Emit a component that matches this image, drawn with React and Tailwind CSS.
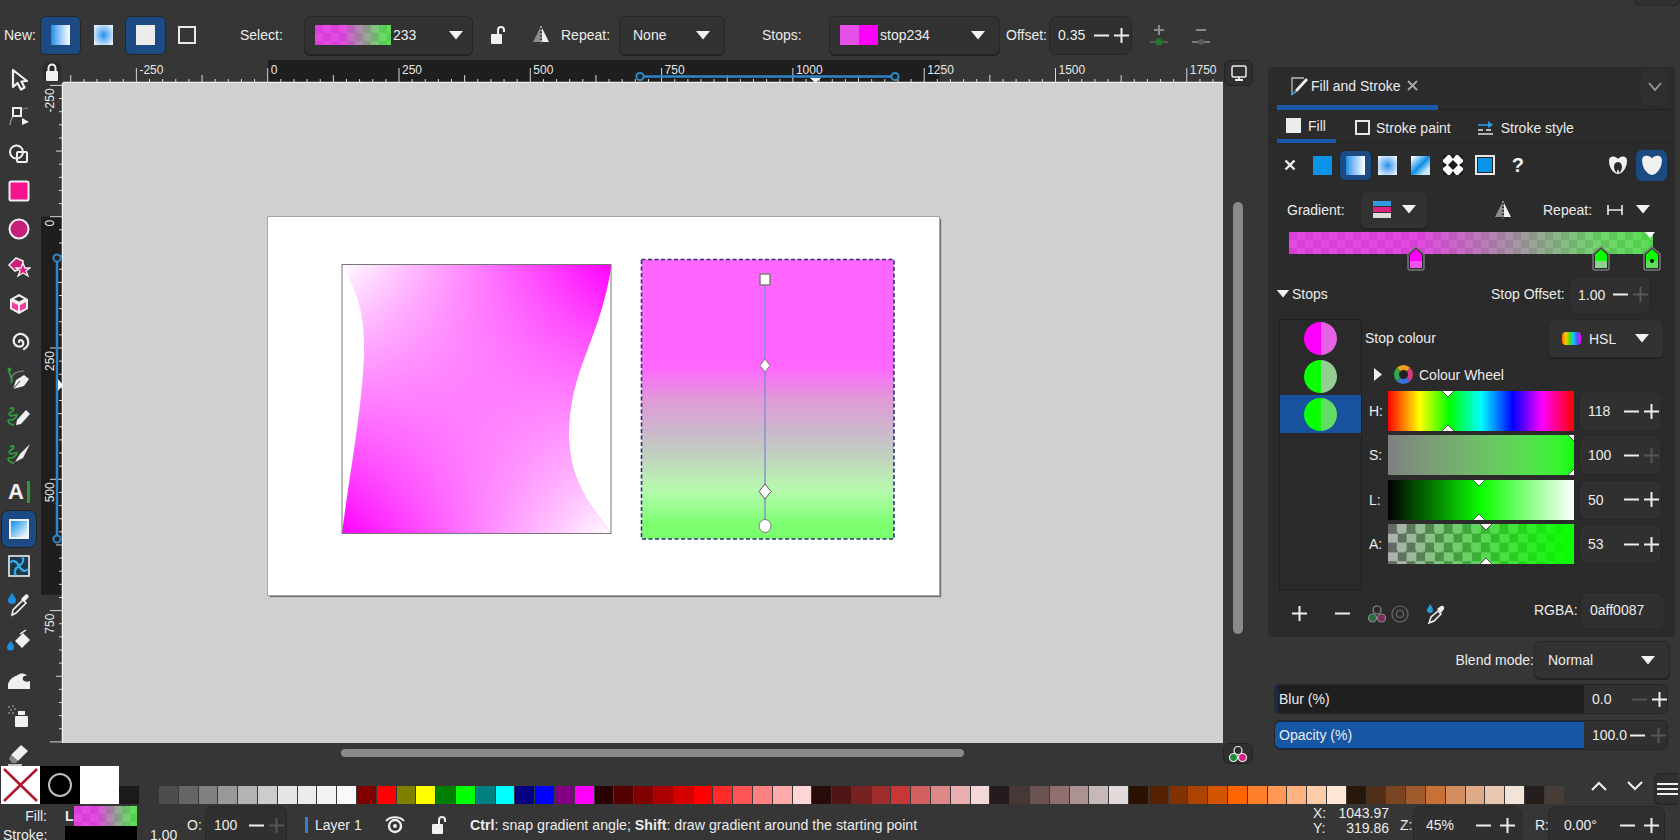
import React from 'react'

const grays = ['#4d4d4d','#666666','#808080','#999999','#b3b3b3','#cccccc','#e6e6e6','#ececec','#f2f2f2','#f9f9f9']
const basics = ['#800000','#ff0000','#808000','#ffff00','#008000','#00ff00','#008080','#00ffff','#000080','#0000ff','#800080','#ff00ff']
const reds = ['#2b0000','#550000','#800000','#aa0000','#d40000','#ff0000','#ff2a2a','#ff5555','#ff8080','#ffaaaa','#ffd5d5']
const dullReds = ['#280b0b','#501616','#782121','#a02c2c','#c83737','#d35f5f','#de8787','#e9afaf','#f4d7d7']
const greyReds = ['#241c1c','#483737','#6c5353','#916f6f','#ac9393','#c8b7b7','#e3dbdb']
const oranges = ['#2b1100','#552200','#803300','#aa4400','#d45500','#ff6600','#ff7f2a','#ff9955','#ffb380','#ffccaa','#ffe6d5']
const browns = ['#28170b','#502d16','#784421','#a05a2c','#c87137','#d38d5f','#deaa87','#e9c6af','#f4e3d7']
const palette = [...grays, ...basics, ...reds, ...dullReds, ...greyReds, ...oranges, ...browns, '#241f1c', '#483e37']

const Arrow = ({ className = '' }) => (
  <svg width="14" height="9" viewBox="0 0 14 9" className={className}><path d="M0 0H14L7 8.5Z" fill="#f2f2f2" /></svg>
)

const Minus = ({ off }) => (
  <svg width="15" height="15" viewBox="0 0 15 15"><path d="M0 7.5H15" stroke={off ? '#555' : '#eee'} strokeWidth="2" /></svg>
)

const Plus = ({ off }) => (
  <svg width="15" height="15" viewBox="0 0 15 15"><path d="M0 7.5H15M7.5 0V15" stroke={off ? '#555' : '#eee'} strokeWidth="2" /></svg>
)

const Spin = ({ value, className = '', minusOff, plusOff, pad = 'pl-2', wide }) => (
  <div className={`flex items-center rounded-lg border border-[#272727] bg-[#303030] ${pad} ${className}`}>
    <span className="flex-1">{value}</span>
    <span className={`flex justify-center ${wide ? 'w-[24px]' : 'w-[20px]'}`}><Minus off={minusOff} /></span>
    <span className={`flex justify-center ${wide ? 'w-[24px]' : 'w-[20px]'}`}><Plus off={plusOff} /></span>
  </div>
)

const Drop = ({ className = '', children }) => (
  <div className={`flex items-center rounded-md border border-[#272727] bg-[#323232] shadow-[0_1px_0_#1f1f1f] ${className}`}>
    {children}
  </div>
)

const gradientSwatch = 'bg-[linear-gradient(90deg,rgba(255,0,255,0.6)_0%,rgba(255,0,255,0.6)_35%,rgba(10,255,0,0.4)_85%,rgba(10,255,0,0.53)_100%),repeating-conic-gradient(#b8b8b8_0_25%,#9e9e9e_0_50%)] [background-size:100%_100%,16px_16px]'

const LockOpen = ({ size = 20 }) => (
  <svg width={size} height={size} viewBox="0 0 20 20" fill="none">
    <rect x="3" y="9" width="11" height="10" rx="1" fill="#f0f0f0" />
    <path d="M10 9V5a3 3 0 0 1 6 0v2" stroke="#f0f0f0" strokeWidth="2" />
  </svg>
)

const FlipIcon = () => (
  <svg width="20" height="20" viewBox="0 0 20 20">
    <path d="M9 3V17H2Z" fill="#8a8a8a" />
    <path d="M11 3V17H18Z" fill="#f0f0f0" />
    <path d="M10 1V19" stroke="#eee" strokeWidth="1" strokeDasharray="2 1.5" />
  </svg>
)

// tool icons, top to bottom
const toolIcons = [
  <svg width="22" height="24" viewBox="0 0 22 24" fill="none"><path d="M5 3V20L9.5 16L13 22.5L16.5 20.5L13.5 14.5L19 14Z" stroke="#f0f0f0" strokeWidth="2.2" strokeLinejoin="round" /></svg>,
  <svg width="24" height="24" viewBox="0 0 24 24" fill="none"><path d="M3 21C4 12 10 5 21 4" stroke="#999" strokeWidth="1.2" /><rect x="6" y="4" width="8" height="8" fill="#333" stroke="#f0f0f0" strokeWidth="2" /><path d="M15 14L22 18L15 21Z" fill="#f0f0f0" /></svg>,
  <svg width="24" height="24" viewBox="0 0 24 24" fill="none"><circle cx="9.5" cy="10" r="6.5" stroke="#f0f0f0" strokeWidth="2" /><rect x="10" y="10" width="10" height="10" rx="1" stroke="#f0f0f0" strokeWidth="2" /></svg>,
  <svg width="24" height="24" viewBox="0 0 24 24"><rect x="2.5" y="2.5" width="19" height="19" rx="1.5" fill="#f5148e" stroke="#f0f0f0" strokeWidth="2" /></svg>,
  <svg width="24" height="24" viewBox="0 0 24 24"><circle cx="12" cy="12" r="9.5" fill="#c71f7a" stroke="#f0f0f0" strokeWidth="2" /></svg>,
  <svg width="24" height="24" viewBox="0 0 24 24"><path d="M2 11L9 4L16 7L15 14L8 17Z" fill="#c71f7a" stroke="#f0f0f0" strokeWidth="1.5" /><path d="M16 9L18 14L23 14L19 17L21 22L16 19L11 22L13 17L9 14L14 14Z" fill="#e01f80" stroke="#f0f0f0" strokeWidth="1.3" /></svg>,
  <svg width="24" height="24" viewBox="0 0 24 24"><path d="M12 2L21 7V17L12 22L3 17V7Z" fill="#f0f0f0" /><path d="M5 10L11 13V19L5 16Z" fill="#ee3fa0" /><path d="M13 13L19 10V16L13 19Z" fill="#ee3fa0" /><path d="M7 7L12 4.5L17 7L12 9.5Z" fill="#333" /></svg>,
  <svg width="24" height="24" viewBox="0 0 24 24" fill="none"><path d="M12 13a2 2 0 0 1 2-2 3.5 3.5 0 0 1 1 6 6 6 0 0 1-8-3 7 7 0 0 1 5-9 8 8 0 0 1 9 6 8 8 0 0 1-4 9" stroke="#f0f0f0" strokeWidth="2.2" strokeLinecap="round" /></svg>,
  <svg width="26" height="26" viewBox="0 0 26 26" fill="none"><path d="M3 3C2 9 8 11 5 17" stroke="#2f9a3a" strokeWidth="2" /><circle cx="3.5" cy="3.5" r="2" fill="#2f9a3a" /><path d="M5 12C7 7 12 5 18 5" stroke="#888" strokeWidth="1.2" /><path d="M7 23L10 14L18 9L23 13L18 20Z" fill="#f0f0f0" /><path d="M7 23L14 15" stroke="#333" strokeWidth="1" /></svg>,
  <svg width="26" height="26" viewBox="0 0 26 26" fill="none"><path d="M4 6C8 3 9 7 5 9S4 14 9 12 8 18 4 17 3 22 8 22" stroke="#2f9a3a" strokeWidth="1.8" /><path d="M10 22L11 17L20 7L24 11L15 21Z" fill="#f0f0f0" /></svg>,
  <svg width="26" height="26" viewBox="0 0 26 26" fill="none"><path d="M4 6C8 3 9 7 5 9S4 14 9 12 8 18 4 17 3 22 8 22" stroke="#2f9a3a" strokeWidth="1.8" /><path d="M9 21L14 13L24 3L17 17Z" fill="#f0f0f0" /></svg>,
  <div className="flex items-center pt-[2px]"><span className="text-[22px] leading-none font-bold text-[#f0f0f0]">A</span><span className="ml-[3px] h-[22px] w-[3px] bg-[#2f9a3a]" /></div>,
  <div className="h-[20px] w-[20px] border-2 border-[#f0f0f0] bg-[linear-gradient(135deg,#0a8fe8,#fff)]" />,
  <svg width="22" height="22" viewBox="0 0 22 22" fill="none"><rect x="1" y="1" width="20" height="20" fill="#1c3a4a" stroke="#f0f0f0" strokeWidth="1.6" /><path d="M11 11C8 5 4 5 2 8M11 11C16 8 16 4 14 2M11 11C14 17 18 17 20 14M11 11C6 14 6 18 8 20" stroke="#39a9e8" strokeWidth="2.2" /></svg>,
  <svg width="26" height="26" viewBox="0 0 26 26"><path d="M6 2C8 5 10 7 10 9A4 4 0 0 1 2 9C2 7 4 5 6 2Z" fill="#1d8fe0" /><path d="M6 24L7 19L17 9L20 12L10 22Z" fill="#333" stroke="#f0f0f0" strokeWidth="1.6" /><path d="M15 8L19 4C21 2 24 5 22 7L18 11Z" fill="#f0f0f0" /></svg>,
  <svg width="26" height="26" viewBox="0 0 26 26"><path d="M5 13C6 15 8 17 8 19A3.5 3.5 0 0 1 1 19C1 17 3 15 5 13Z" fill="#1d8fe0" /><path d="M9 13L17 5L24 12L16 20Z" fill="#f0f0f0" /><path d="M14 6L20 2" stroke="#f0f0f0" strokeWidth="1.5" /></svg>,
  <svg width="26" height="26" viewBox="0 0 26 26"><path d="M2 23V18C4 12 9 10 12 9C16 6 20 8 21 10C18 9 16 11 17 14C19 16 22 16 24 15V23Z" fill="#f0f0f0" /></svg>,
  <svg width="26" height="26" viewBox="0 0 26 26"><rect x="9" y="13" width="13" height="11" rx="1" fill="#f0f0f0" /><rect x="12" y="8" width="7" height="4" fill="#f0f0f0" /><g fill="#8d8d8d"><circle cx="3" cy="4" r="1" /><circle cx="7" cy="3" r="1" /><circle cx="5" cy="7" r="1" /><circle cx="9" cy="6" r="1" /><circle cx="3" cy="10" r="1" /><circle cx="7" cy="10" r="1" /></g></svg>,
  <svg width="26" height="26" viewBox="0 0 26 26"><path d="M5 14L15 4L22 10L12 20Z" fill="#f0f0f0" /><path d="M5 14L12 20L10 22H6L3 18Z" fill="#888" /><path d="M2 24H16" stroke="#f0f0f0" strokeWidth="1.5" /></svg>,
]

const RulerH = () => {
  const zero = 204.7
  const step = 13.13
  const marks = []
  for (let i = -15; i <= 73; i++) marks.push(i)
  return (
    <svg width="1160" height="23" className="block">
      <rect x={zero} y="0" width="672" height="23" fill="#1e1e1e" />
      {marks.map((i) => {
        const x = zero + i * step
        const top = i % 10 === 0 ? 8 : i % 5 === 0 ? 15 : 19
        return <path key={i} d={`M${x} ${top}V23`} stroke="#d8d8d8" strokeWidth="1" />
      })}
      {marks.filter((i) => i % 10 === 0).map((i) => (
        <text key={i} x={zero + i * step + 3} y="13.5" fontSize="12" fill="#e8e8e8">{i * 25}</text>
      ))}
      <path d="M0 22.5H1160" stroke="#f0f0f0" strokeWidth="1.5" />
      <path d="M577 16.5H832" stroke="#2f86c8" strokeWidth="2.5" />
      <circle cx="577" cy="16.5" r="3.6" fill="#222" stroke="#2f86c8" strokeWidth="2" />
      <circle cx="832" cy="16.5" r="3.6" fill="#222" stroke="#2f86c8" strokeWidth="2" />
      <path d="M747 18H758L752.500 23Z" fill="#f5f5f5" />
    </svg>
  )
}

const RulerV = () => {
  const zero = 133.7
  const step = 13.13
  const marks = []
  for (let i = -10; i <= 40; i++) marks.push(i)
  return (
    <svg width="22" height="660" className="block">
      <rect x="0" y={zero} width="22" height="378" fill="#1e1e1e" />
      {marks.map((i) => {
        const y = zero + i * step
        const left = i % 10 === 0 ? 9 : i % 5 === 0 ? 15 : 18
        return <path key={i} d={`M${left} ${y}H22`} stroke="#d8d8d8" strokeWidth="1" />
      })}
      {marks.filter((i) => i % 10 === 0 && i < 40).map((i) => {
        const y = zero + i * step + 3
        return <text key={i} transform={`translate(12.500 ${y}) rotate(-90)`} textAnchor="end" fontSize="12" fill="#e8e8e8">{i * 25}</text>
      })}
      <path d="M21.500 0V660" stroke="#f0f0f0" strokeWidth="1.5" />
      <path d="M16 175V456" stroke="#2f86c8" strokeWidth="2.5" />
      <circle cx="16" cy="175" r="3.6" fill="#222" stroke="#2f86c8" strokeWidth="2" />
      <circle cx="16" cy="456" r="3.6" fill="#222" stroke="#2f86c8" strokeWidth="2" />
      <path d="M17 296V308L22 302Z" fill="#f5f5f5" />
    </svg>
  )
}

// the page with its two objects; coordinates are page-local
const Drawing = () => (
  <svg width="671" height="378" className="block">
    <defs>
      <linearGradient id="meshTop" x1="0" x2="1" y1="0" y2="0"><stop offset="0" stopColor="#fff" /><stop offset="1" stopColor="#f0f" /></linearGradient>
      <linearGradient id="meshBottom" x1="0" x2="1" y1="0" y2="0"><stop offset="0" stopColor="#f0f" /><stop offset="1" stopColor="#fff" /></linearGradient>
      <linearGradient id="fade" x1="0" x2="0" y1="0" y2="1"><stop offset="0" stopColor="#000" /><stop offset="1" stopColor="#fff" /></linearGradient>
      <mask id="fadeMask"><rect x="74" y="47" width="270" height="270" fill="url(#fade)" /></mask>
      <clipPath id="wavy"><path d="M74 47C88 73 96 93 96 128C96 183 82 253 74 316.500H343C322 288 301 263 301 218C301 153 332 123 343 51V47Z" /></clipPath>
      <linearGradient id="stops" x1="0" x2="0" y1="0" y2="1">
        <stop offset="0" stopColor="#ff66ff" />
        <stop offset="0.385" stopColor="#ff66ff" />
        <stop offset="0.5" stopColor="#e09ad8" />
        <stop offset="0.615" stopColor="#cbb8cb" />
        <stop offset="0.69" stopColor="#c2cdc0" />
        <stop offset="0.77" stopColor="#bde8b5" />
        <stop offset="0.83" stopColor="#b5fbad" />
        <stop offset="0.95" stopColor="#7bff6f" />
        <stop offset="1" stopColor="#7bff6f" />
      </linearGradient>
    </defs>
    <g clipPath="url(#wavy)">
      <rect x="74" y="47" width="270" height="270" fill="url(#meshTop)" />
      <rect x="74" y="47" width="270" height="270" fill="url(#meshBottom)" mask="url(#fadeMask)" />
    </g>
    <rect x="74" y="47.500" width="269" height="269" fill="none" stroke="#777" strokeWidth="1" />
    <rect x="373.500" y="42.500" width="252.500" height="279.500" fill="url(#stops)" />
    <rect x="373.500" y="42.500" width="252.500" height="279.500" fill="none" stroke="#2f2f7a" strokeWidth="1.6" strokeDasharray="4 2.500" />
    <path d="M497 62V309" stroke="#7e8fd8" strokeWidth="1.4" />
    <rect x="492" y="57" width="10" height="11" fill="#fff" stroke="#777" strokeWidth="1.4" />
    <path d="M497 142L502 148.500L497 155L492 148.500Z" fill="#fff" stroke="#777" />
    <path d="M497 267L503 274.500L497 282L491 274.500Z" fill="#fff" stroke="#555" />
    <ellipse cx="497" cy="309" rx="6" ry="6.500" fill="#fff" stroke="#777" />
  </svg>
)

const SliderRow = ({ label, value, bg, pos, minusOff, plusOff }) => (
  <div className="flex h-[40px] items-center">
    <span className="ml-[7px] w-[19px]">{label}</span>
    <div className={`relative h-[40px] w-[186px] overflow-hidden ${bg}`}>
      <svg width="14" height="7" viewBox="0 0 14 7" className="absolute -top-px -ml-[7px]" style={{ left: `${pos}%` }}><path d="M0 0H14L7 7Z" fill="#fff" stroke="#333" strokeWidth="0.8" /></svg>
      <svg width="14" height="7" viewBox="0 0 14 7" className="absolute -bottom-px -ml-[7px]" style={{ left: `${pos}%` }}><path d="M0 7H14L7 0Z" fill="#fff" stroke="#333" strokeWidth="0.8" /></svg>
    </div>
    <Spin value={value} className="ml-[5px] h-[40px] w-[83px]" minusOff={minusOff} plusOff={plusOff} />
  </div>
)

const StopCircle = ({ solid, soft }) => (
  <div className="flex h-[33px] w-[33px] overflow-hidden rounded-full">
    <span className="w-1/2" style={{ background: solid }} />
    <span className="w-1/2" style={{ background: soft }} />
  </div>
)

const Handle = ({ top, bottom, dot, className }) => (
  <svg width="18" height="25" viewBox="0 0 18 25" className={`absolute ${className}`}>
    <path d="M9 1L17 8V22Q17 24 15 24H3Q1 24 1 22V8Z" fill="#2b2b2b" stroke="#777" strokeWidth="1.5" />
    <path d="M9 3L15 8.500V15H3V8.500Z" fill={top} />
    <rect x="3" y="15" width="12" height="7" fill={bottom} />
    {dot && <circle cx="9" cy="15" r="2" fill="#111" />}
  </svg>
)

const PaintIcons = () => (
  <div className="flex h-[44px] items-center pl-[6px] pr-[8px]">
    <span className="flex w-[32.5px] justify-center">
      <svg width="12" height="12" viewBox="0 0 12 12"><path d="M1.500 1.500L10.500 10.500M10.500 1.500L1.500 10.500" stroke="#eee" strokeWidth="2.4" /></svg>
    </span>
    <span className="flex w-[32.5px] justify-center"><span className="h-[19px] w-[19px] bg-[#0a93e8]" /></span>
    <span className="flex h-[31px] w-[32.5px] items-center justify-center rounded-md border border-[#232323] bg-[#1c4a82]">
      <span className="h-[19px] w-[19px] bg-linear-to-r from-[#0a8fe8] to-white" />
    </span>
    <span className="flex w-[32.5px] justify-center"><span className="h-[19px] w-[19px] bg-radial from-[#0a8fe8] to-white" /></span>
    <span className="flex w-[32.5px] justify-center"><span className="h-[19px] w-[19px] bg-[linear-gradient(135deg,#fff_5%,#0a8fe8_50%,#cfe8fa_80%)]" /></span>
    <span className="flex w-[32.5px] justify-center">
      <svg width="20" height="20" viewBox="0 0 20 20"><rect width="20" height="20" fill="#fff" /><path d="M0 0H5L0 5ZM7 0H13L10 4ZM15 0H20V5ZM0 7L4 10L0 13ZM20 7V13L16 10ZM0 15L5 20H0ZM7 20L10 16L13 20ZM20 15V20H15ZM10 5L15 10L10 15L5 10Z" fill="#1a1a1a" /></svg>
    </span>
    <span className="flex w-[32.5px] justify-center"><span className="h-[20px] w-[20px] border-2 border-[#e8e8e8] bg-[#0a93e8] outline outline-[#222] -outline-offset-3" /></span>
    <span className="flex w-[32.5px] justify-center text-[20px] leading-none font-bold text-[#f0f0f0]">?</span>
    <span className="ml-auto flex w-[31px] justify-center">
      <svg width="20" height="20" viewBox="0 0 20 20"><path d="M10 4C12 1 19 0 19 6C19 13 14 19 10 19S1 13 1 6C1 0 8 1 10 4Z" fill="#f0f0f0" /><path d="M10 7C7 7 6 10 6 12C6 14 7 16 8.500 18L10 14L11.500 18C13 16 14 14 14 12C14 10 13 7 10 7Z" fill="#2b2b2b" /></svg>
    </span>
    <span className="ml-[2.5px] flex h-[31px] w-[31px] items-center justify-center rounded-md bg-[#1c4a82]">
      <svg width="22" height="22" viewBox="0 0 20 20"><path d="M10 4C12 1 19 0 19 6C19 13 14 19 10 19S1 13 1 6C1 0 8 1 10 4Z" fill="#f0f0f0" /></svg>
    </span>
  </div>
)

const DockPanel = () => (
  <div className="flex w-[412px] flex-col">
    <div className="mt-[7px] flex w-[407px] flex-col bg-[#2b2b2b]">
      <div className="flex h-[43px] items-center border-b border-[#222] pl-[9px]">
        <div className="flex h-[43px] w-[161px] items-center border-b-[5px] border-[#1a5aa8] pl-[13px]">
          <svg width="20" height="22" viewBox="0 0 20 22" fill="none"><path d="M2 20V3H14" stroke="#bbb" strokeWidth="1.3" /><path d="M5 15L16 3L18 5L7 17Z" fill="#f0f0f0" /><path d="M1 21L5 15L7 17Z" fill="#2e9be0" /></svg>
          <span className="ml-[1px]">Fill and Stroke</span>
          <svg width="11" height="11" viewBox="0 0 11 11" className="ml-[7px]"><path d="M1 1L10 10M10 1L1 10" stroke="#aaa" strokeWidth="1.8" /></svg>
        </div>
        <div className="-mt-[3px] ml-[203px] flex h-[36px] w-[27px] items-center justify-center rounded-md bg-[#2f2f2f]">
          <svg width="14" height="9" viewBox="0 0 14 9" fill="none"><path d="M1 1L7 8L13 1" stroke="#999" strokeWidth="1.8" /></svg>
        </div>
      </div>
      <div className="flex h-[33px] items-center border-b border-[#222] pl-[9px] pt-[3px]">
        <div className="-mt-[3px] flex h-[33px] w-[59px] items-center border-b-[4px] border-[#1a5aa8] pl-[9px] pt-[3px]">
          <span className="h-[15px] w-[15px] bg-[#ececec]" />
          <span className="ml-[7px]">Fill</span>
        </div>
        <span className="ml-[19px] h-[15px] w-[15px] border-2 border-[#e8e8e8]" />
        <span className="ml-[6px]">Stroke paint</span>
        <svg width="17" height="17" viewBox="0 0 17 17" fill="none" className="ml-[26px]"><path d="M1 6H13" stroke="#2e9be0" strokeWidth="1.6" /><path d="M11 2L16 6L11 9Z" fill="#2e9be0" /><path d="M1 11H6M9 11H14" stroke="#eee" strokeWidth="1.4" /><path d="M1 15H16" stroke="#eee" strokeWidth="1.4" /></svg>
        <span className="ml-[7px]">Stroke style</span>
      </div>
      <PaintIcons />
      <div className="flex h-[45px] items-center">
        <span className="ml-[19px] w-[73px]">Gradient:</span>
        <Drop className="h-[38px] w-[68px] justify-center gap-[11px] bg-[#303030]">
          <svg width="18" height="17" viewBox="0 0 18 17"><rect y="0" width="18" height="5" fill="#2e9be0" /><rect y="6" width="18" height="5" fill="#d8237f" /><rect y="12" width="18" height="5" fill="#ddd" /></svg>
          <Arrow />
        </Drop>
        <span className="ml-[65px]"><FlipIcon /></span>
        <span className="ml-[30px]">Repeat:</span>
        <svg width="16" height="10" viewBox="0 0 16 10" className="ml-[15px]"><path d="M1 0V10M15 0V10M1 5H15" stroke="#eee" strokeWidth="1.6" /></svg>
        <Arrow className="ml-[13px]" />
      </div>
      <div className="relative h-[44px]">
        <div className={`ml-[21px] h-[22px] w-[364px] ${gradientSwatch}`} />
        <Handle top="#ff00ff" bottom="#ee55ee" className="left-[139px] top-[14px]" />
        <Handle top="#0aff00" bottom="#8fd28f" className="left-[324px] top-[14px]" />
        <Handle top="#0aff00" bottom="#5fdf5f" dot className="left-[375px] top-[14px]" />
        <svg width="10" height="6" viewBox="0 0 10 6" className="absolute left-[377px] top-0"><path d="M0 0H10L5 6Z" fill="#fff" /></svg>
      </div>
      <div className="flex h-[37px] items-center">
        <Arrow className="-mt-[2px] ml-[8px] h-[8px]" />
        <span className="-mt-[2px] ml-[2px] w-[199px]">Stops</span>
        <span className="-mt-[2px] w-[78px]">Stop Offset:</span>
        <Spin value="1.00" className="h-[38px] w-[82px]" plusOff />
      </div>
      <div className="mt-[6px] flex h-[271px]">
        <div className="ml-[11px] flex h-[271px] w-[83px] flex-col items-center border border-[#1f1f1f] bg-[#2a2a2a]">
          <div className="flex h-[37px] w-full items-center justify-center"><StopCircle solid="#ff00ff" soft="#e663e6" /></div>
          <div className="flex h-[38px] w-full items-center justify-center"><StopCircle solid="#0aff00" soft="#93cf93" /></div>
          <div className="flex h-[38px] w-full items-center justify-center bg-[#16529e]"><StopCircle solid="#0aff00" soft="#62dc62" /></div>
        </div>
        <div className="flex w-[302px] flex-col">
          <div className="flex h-[39px] items-center justify-between pl-[3px]">
            <span className="-mt-[2px]">Stop colour</span>
            <Drop className="h-[39px] w-[116px] pl-[13px]">
              <span className="h-[13px] w-[19px] rounded-sm bg-[linear-gradient(90deg,#f60,#fc0,#5d0,#0cf,#55f,#f0f)]" />
              <span className="ml-[8px]">HSL</span>
              <Arrow className="ml-auto mr-[14px]" />
            </Drop>
          </div>
          <div className="flex h-[33px] items-center">
            <svg width="9" height="13" viewBox="0 0 9 13" className="ml-[12px]"><path d="M0 0L8 6.500L0 13Z" fill="#eee" /></svg>
            <span className="ml-[11px] h-[19px] w-[19px] rounded-full border-[5px] border-[#e8a020] bg-[#222] [border-left-color:#2fa84f] [border-right-color:#d63a7a] [border-bottom-color:#3a6fd8]" />
            <span className="ml-[6px]">Colour Wheel</span>
          </div>
          <div className="flex flex-col gap-[4.4px]">
            <SliderRow label="H:" value="118" pos={32} bg="bg-[linear-gradient(90deg,#f00,#ff0_17%,#0f0_33%,#0ff_50%,#00f_67%,#f0f_83%,#f00)]" />
            <SliderRow label="S:" value="100" pos={100} plusOff bg="bg-linear-to-r from-[#808080] to-[#0aff00]" />
            <SliderRow label="L:" value="50" pos={49} bg="bg-[linear-gradient(90deg,#000,#0aff00_50%,#fff)]" />
            <SliderRow label="A:" value="53" pos={52.5} bg="bg-[linear-gradient(90deg,rgba(10,255,0,0),#0aff00),repeating-conic-gradient(#b0b0b0_0_25%,#666_0_50%)] [background-size:100%_100%,18.6px_18.6px]" />
          </div>
        </div>
      </div>
      <div className="flex h-[47px] items-center">
        <span className="ml-[24px]"><Plus /></span>
        <span className="ml-[28px]"><Minus /></span>
        <svg width="20" height="20" viewBox="0 0 20 20" fill="none" className="ml-[17px]" stroke="#888" strokeWidth="1.2"><circle cx="10" cy="6" r="4" /><circle cx="5.500" cy="14" r="4" fill="#2c6a3f" /><circle cx="14.500" cy="14" r="4" fill="#7a2c5c" /></svg>
        <svg width="18" height="18" viewBox="0 0 18 18" fill="none" className="ml-[4px]" stroke="#6a6a6a" strokeWidth="1.2"><circle cx="9" cy="9" r="8" /><circle cx="9" cy="9" r="3.500" /></svg>
        <svg width="20" height="20" viewBox="0 0 20 20" className="ml-[17px]"><path d="M4 0C6 3 7 4 7 6A3 3 0 0 1 1 6C1 4 3 3 4 0Z" fill="#2e9be0" /><path d="M3 19L5 13L12 7L15 10L8 17Z" fill="#333" stroke="#f0f0f0" strokeWidth="1.5" /><path d="M11 5L15 2C17 1 19 3 18 5L15 9Z" fill="#f0f0f0" /></svg>
        <div className="mt-[2px] ml-[88px] flex h-[38px] items-center self-start">
          <span className="-mt-[3px] w-[46px]">RGBA:</span>
          <div className="flex h-[38px] w-[85px] items-center rounded-lg border border-[#272727] bg-[#303030] pb-[3px] pl-[9px]">0aff0087</div>
        </div>
      </div>
    </div>
    <div className="flex w-[407px] flex-col pt-[4px]">
      <div className="flex h-[38px] items-center justify-end pr-[5px]">
        <span>Blend mode:</span>
        <Drop className="h-[38px] w-[136px] pl-[13px]">
          <span>Normal</span>
          <Arrow className="ml-auto mr-[14px]" />
        </Drop>
      </div>
      <div className="ml-[6px] mt-[5px] flex h-[30px] w-[394px] items-center rounded-md border border-[#262626] bg-[#303030]">
        <div className="flex h-full w-[309px] items-center border-l-[3px] border-[#0f2f58] bg-[#1f1f1f] pl-[1px]">Blur (%)</div>
        <span className="ml-[8px] w-[40px]">0.0</span>
        <Minus off />
        <span className="ml-[5px]"><Plus /></span>
      </div>
      <div className="ml-[6px] mt-[6px] flex h-[30px] w-[394px] items-center rounded-md border border-[#262626] bg-[#303030]">
        <div className="flex h-full w-[309px] items-center rounded-l-md border-y border-[#0d2c55] bg-[#1556a5] pl-[4px]">Opacity (%)</div>
        <span className="ml-[8px] w-[38px]">100.0</span>
        <Minus />
        <span className="ml-[6px]"><Plus off /></span>
      </div>
    </div>
  </div>
)

const StatusBar = () => (
  <div className="flex h-[38px] shrink-0 items-center">
    <div className="flex h-[34px] w-[187px] flex-col self-start">
      <div className="flex h-[20px] items-center">
        <span className="w-[47px] text-right">Fill:</span>
        <span className="ml-[18px] w-[9px] font-bold">L</span>
        <span className={`h-[20px] w-[63px] ${gradientSwatch}`} />
      </div>
      <div className="flex h-[18px] items-center">
        <span className="w-[47px] pl-[3px]">Stroke:</span>
        <span className="ml-[18px] h-[18px] w-[72px] bg-black" />
        <span className="ml-[13px]">1.00</span>
      </div>
    </div>
    <span className="w-[18px]">O:</span>
    <Spin value="100" className="h-[38px] w-[82px] rounded-b-none" plusOff />
    <span className="ml-[18px] h-[16px] w-[3px] bg-[#3a7ad0]" />
    <span className="ml-[7px] w-[60px]">Layer 1</span>
    <svg width="20" height="18" viewBox="0 0 20 18" fill="none" className="ml-[10px]"><path d="M1 5C5 0 15 0 19 5" stroke="#eee" strokeWidth="1.8" /><circle cx="10" cy="10" r="6" stroke="#eee" strokeWidth="2.4" /><circle cx="10" cy="10" r="2" fill="#eee" /></svg>
    <span className="ml-[24px]"><LockOpen /></span>
    <span className="ml-[21px] text-[14.2px]"><b>Ctrl</b>: snap gradient angle; <b>Shift</b>: draw gradient around the starting point</span>
    <div className="ml-auto flex items-center pr-[15px]">
      <div className="-mt-[8px] flex w-[76px] flex-col text-[14px] leading-[15px]">
        <div className="flex justify-between"><span>X:</span><span>1043.97</span></div>
        <div className="flex justify-between"><span>Y:</span><span>319.86</span></div>
      </div>
      <span className="ml-[11px] w-[13px]">Z:</span>
      <Spin value="45%" pad="pl-[12px] pr-[2px]" wide className="h-[38px] w-[109px] rounded-b-none" />
      <span className="ml-[13px] w-[13px]">R:</span>
      <Spin value="0.00°" pad="pl-[15px] pr-[1px]" wide className="h-[38px] w-[117px] rounded-b-none" />
    </div>
  </div>
)

export default function App() {
  return (
    <div className="relative flex h-[840px] w-[1680px] flex-col overflow-hidden bg-[#363636] text-[14px] leading-none text-[#ececec] [font-family:'Liberation_Sans',sans-serif]">
      {/* gradient tool controls */}
      <div className="flex h-[60px] shrink-0 items-center pt-[10px]">
        <span className="ml-[4px] w-[36px]">New:</span>
        <span className="flex h-[39px] w-[41px] items-center justify-center rounded-md border border-[#272727] bg-[#1c4a82]">
          <span className="h-[20px] w-[19px] bg-linear-to-r from-[#0a8fe8] to-white" />
        </span>
        <span className="flex w-[44px] justify-center"><span className="h-[20px] w-[19px] bg-radial from-[#0a8fe8] to-white" /></span>
        <span className="flex h-[39px] w-[41px] items-center justify-center rounded-md border border-[#272727] bg-[#1c4a82]">
          <span className="h-[20px] w-[19px] bg-[#ececec]" />
        </span>
        <span className="flex w-[42px] justify-center"><span className="h-[18px] w-[18px] border-2 border-[#e8e8e8]" /></span>
        <span className="ml-[32px] w-[64px]">Select:</span>
        <Drop className="h-[39px] w-[169px] pl-[10px]">
          <span className={`h-[20px] w-[76px] ${gradientSwatch}`} />
          <span className="ml-[2px]">233</span>
          <Arrow className="ml-[33px]" />
        </Drop>
        <span className="flex w-[50px] justify-center"><LockOpen /></span>
        <span className="flex w-[36px] justify-center"><FlipIcon /></span>
        <span className="ml-[2px] w-[58px]">Repeat:</span>
        <Drop className="h-[39px] w-[106px] pl-[13px]">
          <span>None</span>
          <Arrow className="ml-auto mr-[14px]" />
        </Drop>
        <span className="ml-[37px] w-[67px]">Stops:</span>
        <Drop className="h-[39px] w-[171px] pl-[10px]">
          <span className="h-[20px] w-[38px] bg-[linear-gradient(90deg,#e650e6_50%,#ff00ff_50%)]" />
          <span className="ml-[2px]">stop234</span>
          <Arrow className="ml-auto mr-[14px]" />
        </Drop>
        <span className="ml-[6px] w-[43px]">Offset:</span>
        <Spin value="0.35" className="h-[39px] w-[83px]" />
        <span className="flex w-[54px] justify-center">
          <svg width="20" height="22" viewBox="0 0 20 22" fill="none"><path d="M10 1V11M5 6H15" stroke="#8a8a8a" strokeWidth="2" /><path d="M1 18H19" stroke="#5a5a5a" strokeWidth="2" /><circle cx="10" cy="18" r="3.500" fill="#1f7a2a" /></svg>
        </span>
        <span className="flex w-[30px] justify-center">
          <svg width="20" height="22" viewBox="0 0 20 22" fill="none"><path d="M5 6H15" stroke="#8a8a8a" strokeWidth="2" /><path d="M1 18H19" stroke="#7a7a7a" strokeWidth="2" /><circle cx="10" cy="18" r="3" fill="#5a5a5a" /></svg>
        </span>
      </div>
      <div className="absolute right-0 top-0 h-[6px] w-[46px] rounded-b-md border border-t-0 border-[#272727] bg-[#303030]" />

      {/* tools, canvas, dock */}
      <div className="flex h-[706px] shrink-0">
        <div className="flex w-[40px] flex-col items-center pr-[2px]">
          {toolIcons.map((icon, i) => (
            <div key={i} className={`flex h-[37.5px] w-[36px] shrink-0 items-center justify-center ${i === 12 ? 'rounded-lg border border-[#222] bg-[#1c4a82]' : ''}`}>
              {icon}
            </div>
          ))}
        </div>
        <div className="grid w-[1228px] grid-cols-[23px_1160px_45px] grid-rows-[23px_660px_23px]">
          <div className="flex items-start justify-center pt-[2px] pl-[1px]">
            <span className="flex h-[20px] w-[18px] items-center justify-center rounded-md bg-[#2b2b2b]">
              <svg width="14" height="18" viewBox="0 0 14 18" fill="none"><rect x="1" y="8" width="12" height="10" rx="1" fill="#f0f0f0" /><path d="M3.500 8V5a3.500 3.500 0 0 1 7 0v3" stroke="#f0f0f0" strokeWidth="2" /></svg>
            </span>
          </div>
          <RulerH />
          <div className="flex items-start pl-[1px]">
            <span className="flex h-[26px] w-[29px] items-center justify-center rounded-md border border-[#232323] bg-[#2f2f2f]">
              <svg width="18" height="18" viewBox="0 0 18 18" fill="none"><rect x="2" y="2" width="14" height="11" rx="1.500" stroke="#eee" strokeWidth="1.5" /><path d="M5 16H13M9 13V16" stroke="#eee" strokeWidth="1.8" /></svg>
            </span>
          </div>
          <div className="flex justify-end"><RulerV /></div>
          <div className="relative bg-[#d0d0d0]">
            <div className="absolute left-[204.7px] top-[133.7px] bg-white shadow-[2px_2px_1px_#6f6f6f] outline outline-[#a5a5a5]">
              <Drawing />
            </div>
          </div>
          <div className="relative">
            <div className="absolute left-[10px] top-[119px] h-[432px] w-[10px] rounded-full bg-[#8a8a8a]" />
          </div>
          <div />
          <div className="relative">
            <div className="absolute left-[278px] top-[6px] h-[8px] w-[623px] rounded-full bg-[#8a8a8a]" />
          </div>
          <div className="flex items-start">
            <span className="flex h-[21px] w-[30px] items-center justify-center rounded-md border border-[#232323] bg-[#2f2f2f]">
              <svg width="20" height="18" viewBox="0 0 20 18" stroke="#eee" strokeWidth="1.2"><circle cx="10" cy="5.500" r="4" fill="#2a2a2a" /><circle cx="5.500" cy="12.500" r="4" fill="#1f8a3a" /><circle cx="14.500" cy="12.500" r="4" fill="#d81f80" /></svg>
            </span>
          </div>
        </div>
        <DockPanel />
      </div>

      {/* palette row */}
      <div className="flex h-[40px] shrink-0 items-end pb-[2px] pl-[1px]">
        <div className="relative h-[38px] w-[39px] bg-white">
          <svg width="39" height="38" viewBox="0 0 39 38" className="block"><path d="M3 3L36 35M36 3L3 35" stroke="#b0182e" strokeWidth="2.5" /></svg>
        </div>
        <div className="flex h-[38px] w-[40px] items-center justify-center bg-black">
          <span className="h-[24px] w-[24px] rounded-full border-[2.5px] border-[#bcbcbc]" />
        </div>
        <div className="h-[38px] w-[39px] bg-white" />
        <div className="h-[18px] w-[20px] bg-[#1a1a1a]" />
        <div className="ml-[20px] flex h-[18px]">
          {palette.map((c, i) => (
            <span key={i} className="h-[18px] w-[19.8px] border-r border-[#3a3a3a]" style={{ background: c }} />
          ))}
        </div>
        <div className="mb-[11px] ml-[26px] flex h-[14px] items-center gap-[20px]">
          <svg width="16" height="10" viewBox="0 0 16 10" fill="none"><path d="M1 9L8 2L15 9" stroke="#f0f0f0" strokeWidth="2" /></svg>
          <svg width="16" height="10" viewBox="0 0 16 10" fill="none"><path d="M1 1L8 8L15 1" stroke="#f0f0f0" strokeWidth="2" /></svg>
        </div>
        <div className="-mb-[1px] ml-[11px] flex h-[32px] w-[24px] flex-col justify-center gap-[3px] rounded-l-md border border-r-0 border-[#232323] bg-[#2f2f2f] pl-[2px]">
          <span className="h-[2px] w-full bg-[#eee]" />
          <span className="h-[2px] w-full bg-[#eee]" />
          <span className="h-[2px] w-full bg-[#eee]" />
        </div>
      </div>
      <StatusBar />
    </div>
  )
}
